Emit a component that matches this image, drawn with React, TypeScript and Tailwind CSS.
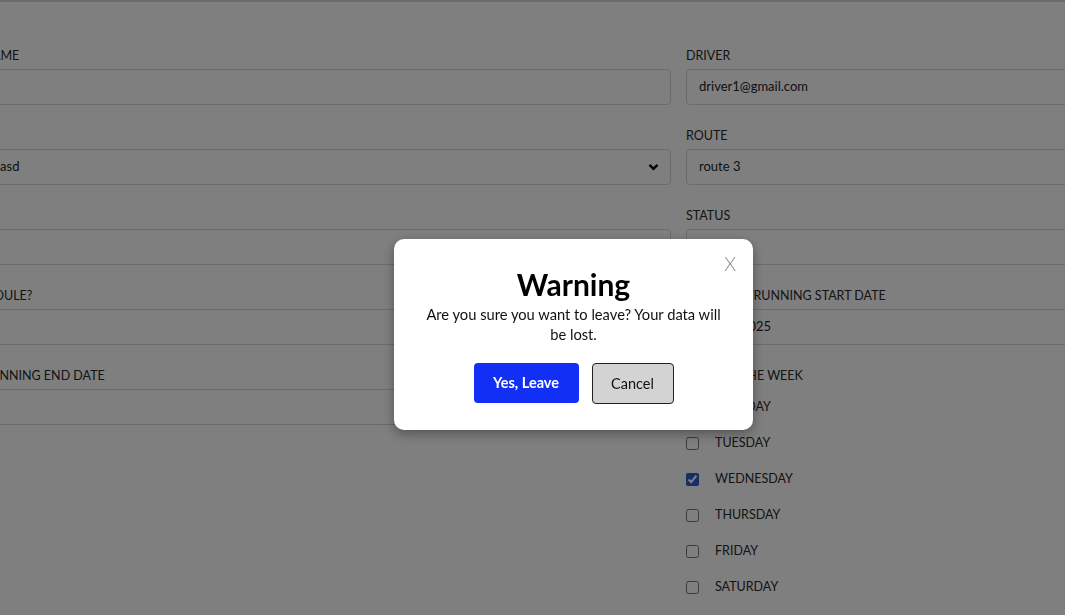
import React from "react";

const font = { fontFamily: "Lato, 'Noto Sans', sans-serif" };

function Label({ children }: { children: React.ReactNode }) {
  return (
    <div className="h-[16px] text-[12.5px] leading-[16px] uppercase text-[#2a2a2a] mb-[5px] whitespace-nowrap">
      {children}
    </div>
  );
}

function Input({ value = "" }: { value?: string }) {
  return (
    <div className="h-[36px] w-full rounded-[4px] border border-[#d6d6d6] bg-white px-[12px] flex items-center text-[13px] text-[#212529] whitespace-nowrap overflow-hidden">
      {value}
    </div>
  );
}

function Select({ value }: { value: string }) {
  return (
    <div className="h-[36px] w-full rounded-[4px] border border-[#d6d6d6] bg-white pl-[13px] pr-[12px] flex items-center justify-between text-[13px] text-[#212529] whitespace-nowrap overflow-hidden">
      <span>{value}</span>
      <svg width="11" height="8" viewBox="0 0 11 8" className="mr-[-1px]">
        <path d="M1.5 1.8 L5.5 5.8 L9.5 1.8" fill="none" stroke="#000" strokeWidth="2.4" />
      </svg>
    </div>
  );
}

function Field({ label, children }: { label: string; children: React.ReactNode }) {
  return (
    <div className="flex flex-col">
      <Label>{label}</Label>
      {children}
    </div>
  );
}

const days = ["MONDAY", "TUESDAY", "WEDNESDAY", "THURSDAY", "FRIDAY", "SATURDAY"];

export default function App() {
  return (
    <div style={font} className="relative h-[615px] w-full overflow-hidden bg-white border-t-[2px] border-[#d8d8d8]">
      <div className="ml-[-85px] pt-[46px] grid grid-cols-[756px_756px] gap-x-[15px]">
        <div className="flex flex-col gap-y-[23px]">
          <Field label="Schedule Name">
            <Input />
          </Field>
          <Field label="Bus">
            <Select value="Vehicle 01 - asd" />
          </Field>
          <Field label="Type">
            <Input />
          </Field>
          <Field label="Repeat Schedule?">
            <Input />
          </Field>
          <Field label="Schedule Running End Date">
            <Input />
          </Field>
        </div>
        <div className="flex flex-col gap-y-[23px]">
          <Field label="Driver">
            <Input value="driver1@gmail.com" />
          </Field>
          <Field label="Route">
            <Input value="route 3" />
          </Field>
          <Field label="Status">
            <Input value="Active" />
          </Field>
          <Field label="Schedule Running Start Date">
            <Input value="06/18/2025" />
          </Field>
          <div className="flex flex-col">
            <div className="h-[16px] text-[12.5px] leading-[16px] text-[#2a2a2a] mb-[5px]">DAYS OF THE WEEK</div>
            {days.map((d) => (
              <label key={d} className="h-[36px] flex items-center gap-[16px] text-[12.5px] text-[#2a2a2a]">
                <input
                  type="checkbox"
                  defaultChecked={d === "WEDNESDAY"}
                  className="m-0 h-[13px] w-[13px] accent-[#2a5bd0]"
                />
                <span>{d}</span>
              </label>
            ))}
          </div>
        </div>
      </div>

      <div className="fixed inset-0 bg-black/50">
        <div className="absolute left-[394px] top-[239px] w-[359px] rounded-[10px] bg-white px-[29px] pt-[27px] pb-[26px] shadow-[0_4px_12px_rgba(0,0,0,0.35)]">
          <div className="absolute right-[17px] top-[13px] text-[19px] leading-[24px] text-[#8a8a8a] font-light">X</div>
          <div className="text-center text-[30px] leading-[36px] font-bold text-black">Warning</div>
          <p className="mt-[2px] text-center text-[14.7px] leading-[20px] text-[#111]">
            Are you sure you want to leave? Your data will be lost.
          </p>
          <div className="mt-[19px] flex justify-center gap-[13px]">
            <button className="h-[40px] w-[105px] rounded-[4px] bg-[#112ff5] text-[14.5px] font-bold text-white">
              Yes, Leave
            </button>
            <button className="h-[41px] w-[82px] rounded-[4px] border border-[#222] bg-[#d3d3d3] text-[14.5px] text-[#111]">
              Cancel
            </button>
          </div>
        </div>
      </div>
    </div>
  );
}
